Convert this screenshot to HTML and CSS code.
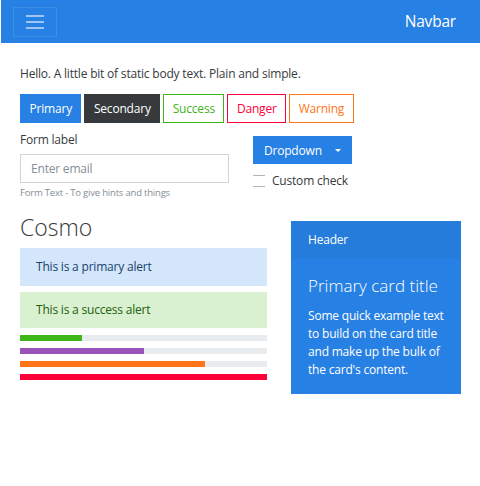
FILE: index.html
```html
<!DOCTYPE html>
<html>
<head>
<meta charset="utf-8">
<link rel="stylesheet" href="styles.css">
</head>
<body>
<nav class="navbar">
  <button class="toggler" type="button" aria-label="Toggle navigation">
    <svg width="20" height="16" viewBox="0 0 20 16"><g stroke="rgba(255,255,255,0.55)" stroke-width="2"><line x1="1" y1="2" x2="19" y2="2"/><line x1="1" y1="8" x2="19" y2="8"/><line x1="1" y1="14" x2="19" y2="14"/></g></svg>
  </button>
  <span class="brand">Navbar</span>
</nav>
<main class="container">
  <p class="lead-text">Hello. A little bit of static body text. Plain and simple.</p>
  <div class="btn-row">
    <button class="btn btn-primary">Primary</button>
    <button class="btn btn-secondary">Secondary</button>
    <button class="btn btn-outline-success">Success</button>
    <button class="btn btn-outline-danger">Danger</button>
    <button class="btn btn-outline-warning">Warning</button>
  </div>
  <div class="form-row">
    <div class="form-col">
      <label class="form-label">Form label</label>
      <input class="form-control" type="email" placeholder="Enter email">
      <div class="form-text">Form Text - To give hints and things</div>
    </div>
    <div class="side-col">
      <button class="btn btn-primary dropdown">Dropdown <span class="caret"></span></button>
      <label class="check"><span class="check-box"></span>Custom check</label>
    </div>
  </div>
  <div class="lower-row">
    <div class="left-col">
      <h2 class="title">Cosmo</h2>
      <div class="alert alert-primary">This is a primary alert</div>
      <div class="alert alert-success">This is a success alert</div>
      <div class="progress"><div class="bar bar-success" style="width:25%"></div></div>
      <div class="progress"><div class="bar bar-info" style="width:50%"></div></div>
      <div class="progress"><div class="bar bar-warning" style="width:75%"></div></div>
      <div class="progress"><div class="bar bar-danger" style="width:100%"></div></div>
    </div>
    <div class="card">
      <div class="card-header">Header</div>
      <div class="card-body">
        <h4 class="card-title">Primary card title</h4>
        <p class="card-text">Some quick example text to build on the card title and make up the bulk of the card's content.</p>
      </div>
    </div>
  </div>
</main>
</body>
</html>
```
FILE: styles.css
```css
* { box-sizing: border-box; }
html, body { margin: 0; padding: 0; background: #fff; }
body {
  font-family: "Open Sans", "Noto Sans", sans-serif;
  font-size: 12px;
  color: #373a3c;
  letter-spacing: -0.2px;
}
.navbar {
  height: 43px;
  margin-left: 1px;
  background: #2780e3;
  display: flex;
  align-items: center;
  justify-content: space-between;
  padding: 0 24px 0 12px;
}
.toggler {
  width: 44px;
  height: 30px;
  border: 1px solid rgba(255,255,255,0.1);
  background: transparent;
  display: flex;
  align-items: center;
  justify-content: center;
  padding: 0;
  margin-top: 1px;
}
.brand {
  color: #fff;
  font-size: 15.5px;
  margin-top: -1px;
}
.container { padding: 0 19px 0 20px; }
.lead-text { margin: 22px 0 11px; line-height: 18px; }
.btn-row { display: flex; gap: 3px; }
.btn {
  font-family: inherit;
  font-size: 12px;
  letter-spacing: -0.2px;
  height: 29px;
  padding: 0 8.5px;
  border: 1px solid transparent;
  border-radius: 0;
  background: #fff;
  line-height: 27px;
}
.btn-primary { background: #2780e3; color: #fff; border-color: #2780e3; }
.btn-secondary { background: #373a3c; color: #fff; border-color: #373a3c; }
.btn-outline-success { color: #3fb618; border-color: #3fb618; }
.btn-outline-danger { color: #ff0039; border-color: #ff0039; }
.btn-outline-warning { color: #ff7518; border-color: #ff7518; }
.form-row {
  display: grid;
  grid-template-columns: 209px auto;
  column-gap: 24px;
  margin-top: 8px;
}
.form-label { display: block; line-height: 18px; margin-bottom: 5px; }
.form-control {
  display: block;
  width: 209px;
  height: 29px;
  border: 1px solid #ced4da;
  border-radius: 0;
  padding: 0 10px;
  font-family: inherit;
  font-size: 12px;
  letter-spacing: -0.2px;
  color: #495057;
}
.form-control::placeholder { color: #868e96; }
.form-text { font-size: 9.5px; color: #868e96; margin-top: 3px; line-height: 14px; }
.side-col { display: flex; flex-direction: column; align-items: flex-start; padding-top: 5px; }
.dropdown { width: 99px; height: 28px; text-align: left; padding: 0 10px; display: flex; align-items: center; justify-content: space-between; }
.caret {
  width: 0; height: 0;
  border-left: 3px solid transparent;
  border-right: 3px solid transparent;
  border-top: 3px solid #fff;
}
.check { display: flex; align-items: center; gap: 7px; margin-top: 10px; line-height: 14px; }
.check-box {
  width: 12px; height: 12px;
  border-top: 1px solid #adb5bd;
  border-bottom: 1px solid #adb5bd;
}
.lower-row {
  display: grid;
  grid-template-columns: 247px 170px;
  column-gap: 24px;
  margin-top: 21px;
}
.title {
  font-size: 23px;
  font-weight: 300;
  margin: -8px 0 7px;
  line-height: 28px;
  letter-spacing: 0;
}
.alert { padding: 0 16px; line-height: 37px; height: 37px; margin-bottom: 6px; }
.alert-primary { background: #d4e6f9; color: #14436f; height: 38px; line-height: 38px; }
.alert-success { background: #d9f0d1; color: #216109; height: 36px; line-height: 36px; }
.progress { height: 6px; background: #e9ecef; margin-top: 7px; }
.bar { height: 100%; }
.bar-success { background: #3fb618; }
.bar-info { background: #9954bb; }
.bar-warning { background: #ff7518; }
.bar-danger { background: #ff0039; }
.card { background: #2780e3; color: #fff; height: 173px; }
.card-header { background: rgba(0,0,0,0.03); height: 37px; padding: 0 17px; line-height: 37px; }
.card-body { padding: 15px 17px; }
.card-title { font-size: 17px; font-weight: 300; margin: 0 0 8px; line-height: 26px; letter-spacing: 0; }
.card-text { margin: 0; line-height: 18px; }
```
